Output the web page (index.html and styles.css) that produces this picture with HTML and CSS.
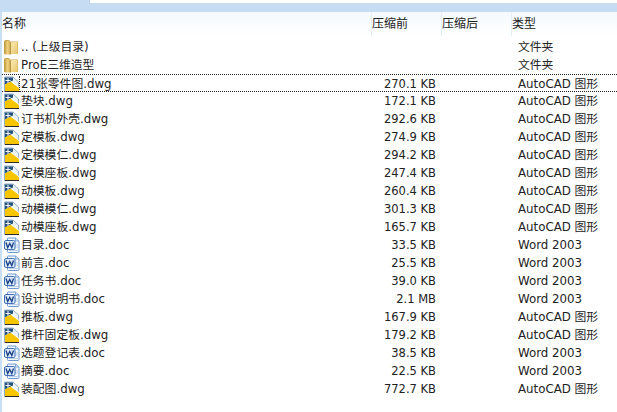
FILE: index.html
```html
<!DOCTYPE html>
<html lang="zh">
<head>
<meta charset="utf-8">
<title>压缩文件列表</title>
<link rel="stylesheet" href="styles.css">
</head>
<body>
<svg class="defs" width="0" height="0" aria-hidden="true">
  <defs>
    <linearGradient id="fg" x1="0" y1="0" x2="1" y2="0"><stop offset="0" stop-color="#b9963c"/><stop offset=".55" stop-color="#f0d27e"/><stop offset="1" stop-color="#cfa94f"/></linearGradient>
    <linearGradient id="fr" x1="0" y1="0" x2="1" y2="1"><stop offset="0" stop-color="#fbeeb8"/><stop offset="1" stop-color="#e8c66c"/></linearGradient>
    <symbol id="folder" viewBox="0 0 16 16">
      <path d="M0 2.500 1 1h4l1 1.500h8V15H0z" fill="#cdaa52"/>
      <path d="M0 2.500 5 2 6.500 3.500V15.500H1.500L0 14.500z" fill="url(#fg)"/>
      <path d="M6.500 3.500 13.500 2.500V15H6.500z" fill="url(#fr)"/>
      <path d="M6.500 3.500V15.500" stroke="#a8882f" stroke-width=".8"/>
    </symbol>
    <symbol id="dwg" viewBox="0 0 16 16">
      <path d="M.5 1h8.500l5.500 5v9.500H.5z" fill="#eaf2fa" stroke="#7f9cb8" stroke-width=".8"/>
      <path d="M1 1.500h8v3l-8 4z" fill="#24527f"/>
      <path d="M4 2v5M1.500 4.500h5" stroke="#fff" stroke-width="1"/>
      <path d="M1 15V8.500L7 5.500l8 6v3.500z" fill="#f7c600"/>
      <path d="M7 5.500 15 11.500" stroke="#fff" stroke-width="1"/>
      <path d="M1 15.500h14" stroke="#2a2a2a" stroke-width="1"/>
    </symbol>
    <symbol id="doc" viewBox="0 0 16 16">
      <path d="M3.500 1.500Q3.500 1 4 1H11.500L15 4v10.500q0 1-1 1H4.500q-1 0-1-1z" fill="#f3f8fe" stroke="#6f9ad0" stroke-width="1"/>
      <path d="M11.500 1v3H15" fill="#cfe0f4" stroke="#6f9ad0" stroke-width=".8"/>
      <path d="M11 8h3M11 10h3M5 13.500h9" stroke="#a9c3e3" stroke-width=".8"/>
      <rect x=".5" y="3.500" width="10.500" height="9" rx="1.500" fill="#dde9f8" stroke="#3f70b6" stroke-width="1"/>
      <path d="M2 5.500 3.700 10.500 5.750 6.500 7.800 10.500 9.500 5.500" fill="none" stroke="#173f86" stroke-width="1.300"/>
    </symbol>
  </defs>
</svg>
<div class="app">
  <div class="topbar"><div class="topbar-field"></div></div>
  <div class="head">
    <span class="h-name">名称</span>
    <span class="h-col">压缩前</span>
    <span class="h-col">压缩后</span>
    <span class="h-col">类型</span>
  </div>
  <div class="list">
    <div class="row"><svg class="ico"><use href="#folder"/></svg><span class="name">.. (上级目录)</span><span class="size"></span><span class="type">文件夹</span></div>
    <div class="row"><svg class="ico"><use href="#folder"/></svg><span class="name">ProE三维造型</span><span class="size"></span><span class="type">文件夹</span></div>
    <div class="row focus"><svg class="ico"><use href="#dwg"/></svg><span class="name">21张零件图.dwg</span><span class="size">270.1 KB</span><span class="type">AutoCAD 图形</span></div>
    <div class="row"><svg class="ico"><use href="#dwg"/></svg><span class="name">垫块.dwg</span><span class="size">172.1 KB</span><span class="type">AutoCAD 图形</span></div>
    <div class="row"><svg class="ico"><use href="#dwg"/></svg><span class="name">订书机外壳.dwg</span><span class="size">292.6 KB</span><span class="type">AutoCAD 图形</span></div>
    <div class="row"><svg class="ico"><use href="#dwg"/></svg><span class="name">定模板.dwg</span><span class="size">274.9 KB</span><span class="type">AutoCAD 图形</span></div>
    <div class="row"><svg class="ico"><use href="#dwg"/></svg><span class="name">定模模仁.dwg</span><span class="size">294.2 KB</span><span class="type">AutoCAD 图形</span></div>
    <div class="row"><svg class="ico"><use href="#dwg"/></svg><span class="name">定模座板.dwg</span><span class="size">247.4 KB</span><span class="type">AutoCAD 图形</span></div>
    <div class="row"><svg class="ico"><use href="#dwg"/></svg><span class="name">动模板.dwg</span><span class="size">260.4 KB</span><span class="type">AutoCAD 图形</span></div>
    <div class="row"><svg class="ico"><use href="#dwg"/></svg><span class="name">动模模仁.dwg</span><span class="size">301.3 KB</span><span class="type">AutoCAD 图形</span></div>
    <div class="row"><svg class="ico"><use href="#dwg"/></svg><span class="name">动模座板.dwg</span><span class="size">165.7 KB</span><span class="type">AutoCAD 图形</span></div>
    <div class="row"><svg class="ico"><use href="#doc"/></svg><span class="name">目录.doc</span><span class="size">33.5 KB</span><span class="type">Word 2003</span></div>
    <div class="row"><svg class="ico"><use href="#doc"/></svg><span class="name">前言.doc</span><span class="size">25.5 KB</span><span class="type">Word 2003</span></div>
    <div class="row"><svg class="ico"><use href="#doc"/></svg><span class="name">任务书.doc</span><span class="size">39.0 KB</span><span class="type">Word 2003</span></div>
    <div class="row"><svg class="ico"><use href="#doc"/></svg><span class="name">设计说明书.doc</span><span class="size">2.1 MB</span><span class="type">Word 2003</span></div>
    <div class="row"><svg class="ico"><use href="#dwg"/></svg><span class="name">推板.dwg</span><span class="size">167.9 KB</span><span class="type">AutoCAD 图形</span></div>
    <div class="row"><svg class="ico"><use href="#dwg"/></svg><span class="name">推杆固定板.dwg</span><span class="size">179.2 KB</span><span class="type">AutoCAD 图形</span></div>
    <div class="row"><svg class="ico"><use href="#doc"/></svg><span class="name">选题登记表.doc</span><span class="size">38.5 KB</span><span class="type">Word 2003</span></div>
    <div class="row"><svg class="ico"><use href="#doc"/></svg><span class="name">摘要.doc</span><span class="size">22.5 KB</span><span class="type">Word 2003</span></div>
    <div class="row"><svg class="ico"><use href="#dwg"/></svg><span class="name">装配图.dwg</span><span class="size">772.7 KB</span><span class="type">AutoCAD 图形</span></div>
  </div>
</div>
</body>
</html>
```
FILE: styles.css
```css
* { box-sizing: border-box; }
html, body { margin: 0; height: 100%; }
body {
  overflow: hidden;
  background: #fff;
  color: #222;
  font: 12px/18px "DejaVu Sans", "Noto Sans CJK SC", sans-serif;
}
.defs { position: absolute; }
.app {
  height: 412px;
  border-left: 2px solid #c9dff3;
  display: flex;
  flex-direction: column;
}
.topbar {
  height: 12px;
  margin-left: -2px;
  background: #c6dcf2;
  display: flex;
  justify-content: flex-end;
  flex: none;
}
.topbar-field { width: 528px; height: 3px; background: #fff; border-left: 1px solid #b7cde3; }
.head {
  height: 24px;
  flex: none;
  display: grid;
  grid-template-columns: 369px 70px 70px 1fr;
  align-items: center;
  background: linear-gradient(#f4f9fd, #fff);
}
.h-col { border-left: 1px solid #e6eef6; height: 24px; line-height: 24px; }
.list { padding-top: 2px; }
.row {
  height: 18px;
  display: grid;
  grid-template-columns: 19px 347px 68px 82px 1fr;
  align-items: center;
  white-space: nowrap;
}
.ico { width: 16px; height: 16px; margin-left: 2px; }
.name { font-size: 11.8px; }
.size { text-align: right; font-size: 11.5px; }
.type { grid-column: 5; font-size: 11.8px; }
.focus {
  border-top: 1px dotted #222;
  border-bottom: 1px dotted #222;
}
.focus .name {
  margin-left: -2px;
  padding-left: 1px;
  border-left: 1px dotted #222;
  height: 16px;
  line-height: 16px;
}
```
